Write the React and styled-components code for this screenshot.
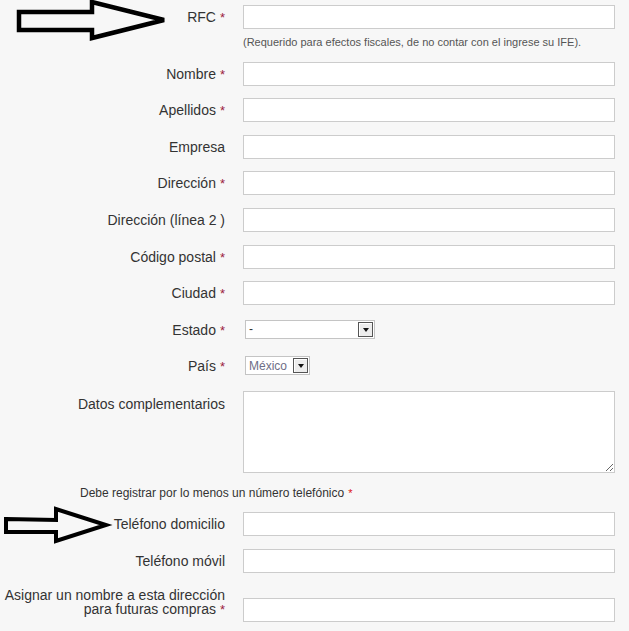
import React from "react";
import styled, { createGlobalStyle } from "styled-components";

const GlobalStyle = createGlobalStyle`
  html, body {
    margin: 0;
    padding: 0;
    background: #f7f7f7;
  }
  body {
    font-family: "Liberation Sans", Arial, sans-serif;
    color: #333;
  }
`;

const Page = styled.div`
  position: relative;
  width: 629px;
  min-height: 631px;
  background: #f7f7f7;
  overflow: hidden;
`;

const Form = styled.form`
  display: flex;
  flex-direction: column;
  gap: 12.6px;
  padding: 5px 0;
`;

const Row = styled.div`
  display: grid;
  grid-template-columns: 225px 372px;
  column-gap: 18px;
  align-items: ${({ $align }) => $align || "center"};
`;

const Label = styled.label`
  display: block;
  text-align: right;
  font-size: 14px;
  line-height: ${({ $lh }) => $lh || "24px"};
  height: ${({ $h }) => $h || "auto"};
  padding-top: ${({ $pt }) => $pt || "0"};
  color: #333;
  align-self: start;
  overflow: visible;
`;

const Req = styled.span`
  color: ${({ $bright }) => ($bright ? "#d11" : "#9b2040")};
  font-size: ${({ $small }) => ($small ? "11px" : "13px")};
  line-height: 1;
  margin-left: 4px;
`;

const Field = styled.div`
  display: flex;
  flex-direction: column;
  align-items: flex-start;
  padding-top: ${({ $pt }) => $pt || "0"};
  align-self: start;
`;

const Input = styled.input`
  box-sizing: border-box;
  display: block;
  width: 372px;
  height: 24px;
  margin: 0;
  border: 1px solid #cccccc;
  background: #fff;
  font-family: inherit;
  font-size: 13px;
  outline: none;
`;

const Help = styled.div`
  margin-top: 7px;
  height: 13px;
  font-size: 11px;
  line-height: 13px;
  color: #555;
`;

const TextArea = styled.textarea`
  box-sizing: border-box;
  width: 372px;
  height: 82px;
  margin: 0;
  border: 1px solid #cccccc;
  background: #fff;
  font-family: inherit;
  outline: none;
  display: block;
`;

const SelectBox = styled.div`
  box-sizing: border-box;
  width: ${({ $w }) => $w}px;
  height: 19px;
  margin: 2px 0 3px 2px;
  border: 1px solid #c4c4c4;
  background: #fff;
  display: flex;
  align-items: center;
  justify-content: space-between;
  padding: 0 1px 0 3px;
  font-size: 12px;
  line-height: 1;
  color: ${({ $muted }) => ($muted ? "#6e6e86" : "#333")};
`;

const DropButton = styled.span`
  box-sizing: border-box;
  width: 15px;
  height: 15px;
  border: 1px solid #555;
  background: #ececec;
  box-shadow: inset 1px 1px 0 #fff;
  display: flex;
  align-items: center;
  justify-content: center;

  &::after {
    content: "";
    border-left: 3.5px solid transparent;
    border-right: 3.5px solid transparent;
    border-top: 4px solid #111;
    margin-top: 1px;
  }
`;

const Notice = styled.div`
  padding-left: 80px;
  height: 14px;
  font-size: 12px;
  line-height: 14px;
  color: #333;
`;

const Arrow = styled.svg`
  position: absolute;
  left: 0;
  top: ${({ $top }) => $top}px;
  pointer-events: none;
`;

const Select = ({ value, width, muted }) => (
  <SelectBox $w={width} $muted={muted}>
    <span>{value}</span>
    <DropButton />
  </SelectBox>
);

const TextRow = ({ label, required }) => (
  <Row>
    <Label $h="24px">
      {label}
      {required && <Req>*</Req>}
    </Label>
    <Input type="text" />
  </Row>
);

const App = () => {
  return (
    <Page>
      <GlobalStyle />
      <Form>
        <Row $align="start">
          <Label $h="24px">
            RFC<Req>*</Req>
          </Label>
          <Field>
            <Input type="text" />
            <Help>
              (Requerido para efectos fiscales, de no contar con el ingrese su
              IFE).
            </Help>
          </Field>
        </Row>
        <TextRow label="Nombre" required />
        <TextRow label="Apellidos" required />
        <TextRow label="Empresa" />
        <TextRow label="Dirección" required />
        <TextRow label="Dirección (línea 2 )" />
        <TextRow label="Código postal" required />
        <TextRow label="Ciudad" required />
        <Row>
          <Label $h="24px">
            Estado<Req>*</Req>
          </Label>
          <Field>
            <Select value="-" width={130} />
          </Field>
        </Row>
        <Row>
          <Label $h="24px">
            País<Req>*</Req>
          </Label>
          <Field>
            <Select value="México" width={65} muted />
          </Field>
        </Row>
        <Row $align="start">
          <Label $lh="14px" $pt="6px">
            Datos complementarios
          </Label>
          <TextArea />
        </Row>
        <Notice>
          Debe registrar por lo menos un número telefónico
          <Req $bright $small>
            *
          </Req>
        </Notice>
        <TextRow label="Teléfono domicilio" />
        <TextRow label="Teléfono móvil" />
        <Row $align="start">
          <Label $lh="14px" $pt="3px" $h="31px">
            Asignar un nombre a esta dirección
            <br />
            para futuras compras<Req>*</Req>
          </Label>
          <Field $pt="13px">
            <Input type="text" />
          </Field>
        </Row>
      </Form>

      <Arrow $top={0} width="180" height="45" viewBox="0 0 180 45">
        <polygon
          points="19,12 92,12 92,2 164,20 92,38 92,30 19,30"
          fill="none"
          stroke="#000"
          strokeWidth="4.5"
          strokeLinejoin="miter"
        />
      </Arrow>
      <Arrow $top={500} width="120" height="50" viewBox="0 500 120 50">
        <polygon
          points="6,519 56,520 56,509 106,525 56,541 56,532 6,532"
          fill="none"
          stroke="#000"
          strokeWidth="4"
          strokeLinejoin="miter"
        />
      </Arrow>
    </Page>
  );
};

export default App;
